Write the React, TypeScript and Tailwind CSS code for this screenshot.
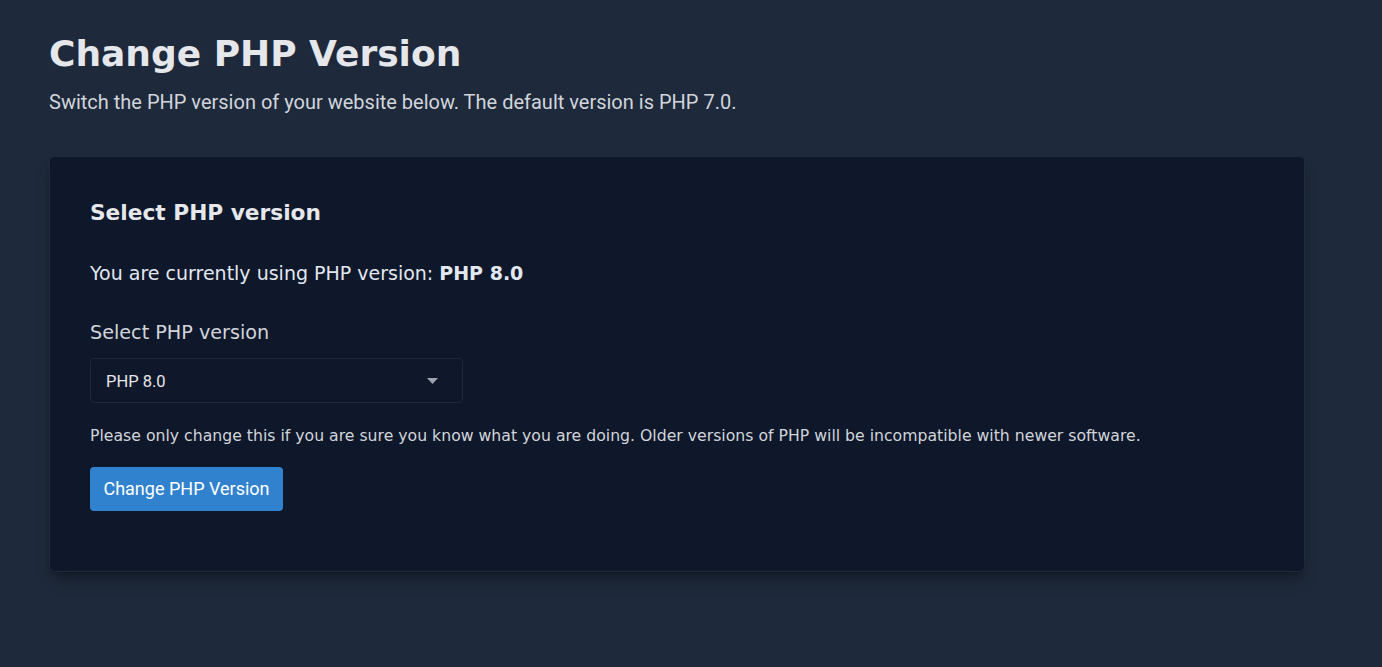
import React from "react";

export default function App() {
  return (
    <div className="min-h-screen w-full bg-[#1e293b] text-[#e2e8f0] font-['DejaVu_Sans',sans-serif]">
      <div className="pl-[49px] pr-[77px] pt-[28px]">
        <h1 className="text-[36px] leading-[52px] font-bold text-[#e5e7eb]">
          Change PHP Version
        </h1>
        <p className="mt-[8px] font-['Roboto',sans-serif] text-[20px] leading-[28px] text-[#d1d5db]">
          Switch the PHP version of your website below. The default version is PHP 7.0.
        </p>
        <div className="mt-[40px] rounded-md border border-[#1f2a3d] bg-[#0f172a] shadow-lg shadow-black/30 px-[40px] pt-[40px] pb-[60px]">
          <h2 className="text-[21.7px] leading-[32px] font-bold text-[#e5e7eb]">
            Select PHP version
          </h2>
          <p className="mt-[30px] text-[19px] leading-[28px] text-[#e2e8f0]">
            You are currently using PHP version: <span className="font-bold">PHP 8.0</span>
          </p>
          <label className="block mt-[32px] text-[19.2px] leading-[28px] text-[#d1d5db]">
            Select PHP version
          </label>
          <div className="mt-[11px] w-[373px] h-[45px] rounded border border-[#1f2937] bg-[#0f172a] flex items-center justify-between pl-[15px] pr-[24px] pt-[3px]">
            <span className="font-['Roboto',sans-serif] text-[16.5px] text-[#e5e7eb]">PHP 8.0</span>
            <svg width="11" height="6" viewBox="0 0 11 6" className="-mt-[3px]">
              <path d="M0 0 L11 0 L5.5 6 Z" fill="#9ca3af" />
            </svg>
          </div>
          <p className="mt-[23px] text-[15.7px] leading-[20px] text-[#d1d5db]">
            Please only change this if you are sure you know what you are doing. Older versions of PHP will be incompatible with newer software.
          </p>
          <button className="mt-[21px] w-[193px] h-[44px] rounded bg-[#3182ce] font-['Roboto',sans-serif] text-[18px] text-white flex items-center justify-center pb-[2px]">
            Change PHP Version
          </button>
        </div>
      </div>
    </div>
  );
}
